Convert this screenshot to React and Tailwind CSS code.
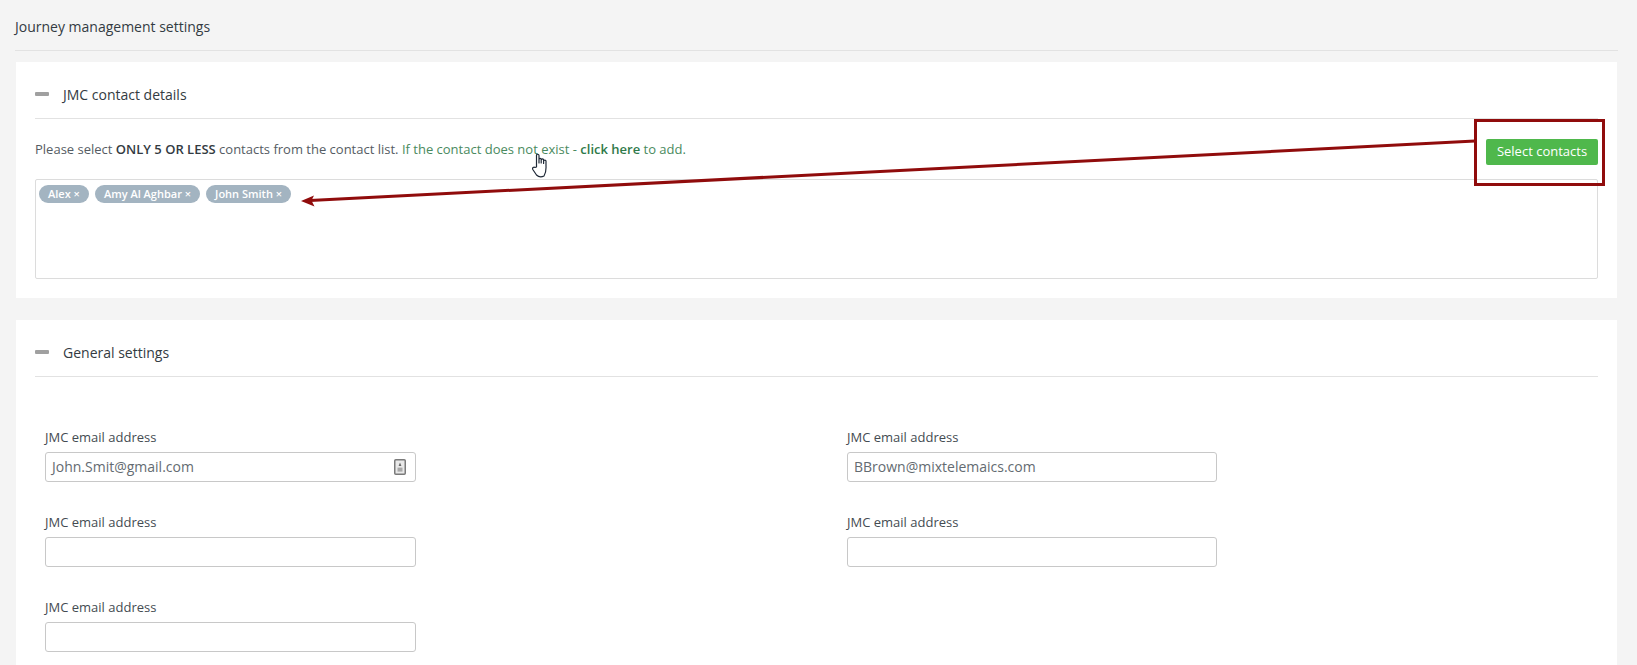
function Field({ value, icon, wide }) {
  return (
    <div className={wide ? "w-[371px]" : "w-[370px]"}>
      <div className="h-[18px] text-[13px] leading-[18px] text-[#444b52] mb-[6px]">JMC email address</div>
      <div className="h-[30px] border border-[#c8c8c8] rounded-[3px] bg-white flex items-center justify-between pl-[6px] pr-[9px] pb-[1px] text-[14px] text-[#646b71]">
        <span>{value}</span>
        {icon && (
          <svg width="12" height="16" viewBox="0 0 12 16" fill="none">
            <rect x="0.75" y="0.75" width="10.5" height="14.5" rx="1" stroke="#7a7a7a" strokeWidth="1.5" fill="#e9e9e9" />
            <path d="M6 3.6 L7.4 7 L4.6 7 Z" fill="#666" />
            <path d="M3.5 8.6 L8.5 8.6 L8.5 12.6 L3.5 12.6 Z" fill="#a8a8a8" />
          </svg>
        )}
      </div>
    </div>
  );
}
function Tag({ children }) {
  return (
    <span className="h-[18px] rounded-full bg-[#a3b4c1] text-white text-[11px] font-semibold flex items-center px-[9px]">{children}</span>
  );
}
function SectionHeader({ children, pl }) {
  return (
    <div className="h-[57px] border-b border-[#e2e2e2] flex items-center pt-[9px]">
      <span className="w-[14px] h-[4px] bg-[#a0a0a0] rounded-[1px] -translate-y-[1px]" />
      <span className={`text-[14px] font-medium text-[#333b42] ${pl}`}>{children}</span>
    </div>
  );
}
export default function App() {
  return (
    <div className="relative h-[665px] overflow-hidden bg-[#f4f4f4] font-['Open_Sans',sans-serif]">
      <div className="pl-[15px] pr-[19px]">
        <div className="h-[51px] border-b border-[#e2e2e2] flex items-center pt-[3px] text-[14px] font-medium text-[#333b42]">Journey management settings</div>
      </div>
      <div className="ml-[16px] mr-[20px] mt-[11px] bg-white px-[19px] h-[236px]">
        <SectionHeader pl="ml-[14px]">JMC contact details</SectionHeader>
        <div className="flex items-start justify-between pt-[20px] h-[60px]">
          <div className="text-[13px] leading-[20px] text-[#555c63]">
            Please select <b className="font-semibold text-[#333b42]">ONLY 5 OR LESS</b> contacts from the contact list.{" "}
            <span className="text-[#4a8a5e]">If the contact does not exist - <b className="font-semibold text-[#2f7a4a]">click here</b> to add.</span>
          </div>
          <button className="w-[112px] h-[26px] bg-[#4fb84c] rounded-[2px] text-white text-[13px]">Select contacts</button>
        </div>
        <div className="h-[100px] border border-[#dcdcdc] rounded-[2px] flex items-start gap-[6px] pl-[3px] pt-[5px]">
          <Tag>Alex ×</Tag>
          <Tag>Amy Al Aghbar ×</Tag>
          <Tag>John Smith ×</Tag>
        </div>
      </div>
      <div className="ml-[16px] mr-[20px] mt-[22px] bg-white px-[19px] h-[400px]">
        <SectionHeader pl="ml-[14px]">General settings</SectionHeader>
        <div className="grid grid-cols-[802px_370px] gap-y-[31px] pl-[10px] pt-[51px]">
          <Field value="John.Smit@gmail.com" icon wide />
          <Field value="BBrown@mixtelemaics.com" />
          <Field value="" wide />
          <Field value="" />
          <Field value="" wide />
        </div>
      </div>

      {/* annotation */}
      <div className="absolute left-[1474px] top-[119px] w-[131px] h-[67px] border-[3px] border-[#900c0c]" />
      <svg className="absolute left-0 top-0 pointer-events-none" width="1637" height="665">
        <line x1="1475" y1="141" x2="310" y2="200.6" stroke="#900c0c" strokeWidth="3" />
        <path d="M301 201 L314 195.5 L311.5 200.6 L314.5 206.5 Z" fill="#900c0c" />
      </svg>
      <svg className="absolute left-[532px] top-[153px]" width="18" height="25" viewBox="0 0 18 25" fill="none">
        <path d="M4.5 14 L4.5 2.5 C4.5 0.8 7 0.8 7 2.5 L7 10 L7 6.5 C7 5 9.2 5 9.2 6.5 L9.2 10 L9.2 7 C9.2 5.6 11.6 5.6 11.6 7 L11.6 10.5 L11.6 8 C11.6 6.8 14 6.8 14 8 L14 13 C14.2 17 14 20 12 23 C9 24.5 6.5 24 4.5 22 L0.8 16.5 C0 15 1.8 13.4 3 14.5 Z" fill="#fff" stroke="#1f2937" strokeWidth="1.2" strokeLinejoin="round" />
      </svg>
    </div>
  );
}
